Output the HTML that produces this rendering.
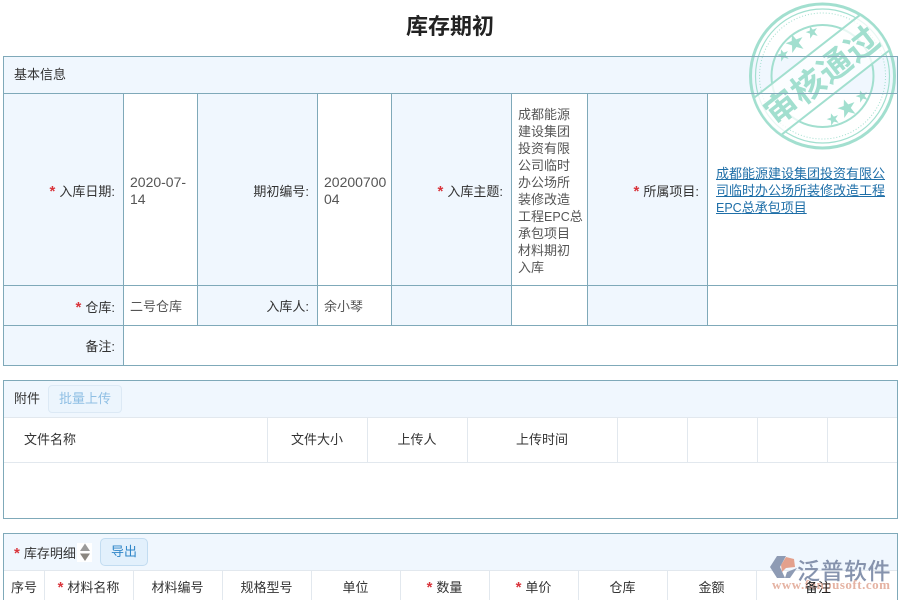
<!DOCTYPE html>
<html lang="zh"><head><meta charset="utf-8"><title>库存期初</title>
<style>
*{box-sizing:border-box}
html,body{margin:0;padding:0;width:900px;height:600px;overflow:hidden;background:#fff}
body{position:relative;font-family:"Noto Sans CJK SC",sans-serif;font-size:13px;color:#333}
.a{position:absolute}
.bg{position:absolute;background:#f0f7fe}
.h{position:absolute;height:1px;background:#7fa9b9}
.v{position:absolute;width:1px;background:#7fa9b9}
.lh{position:absolute;height:1px;background:#e2e8ee}
.lv{position:absolute;width:1px;background:#e2e8ee}
.t{position:absolute;white-space:nowrap;line-height:17px;height:17px;margin-top:-1px}
.r{text-align:right}
.c{text-align:center}
.s{color:#d9343b;font-family:"Liberation Sans",sans-serif;font-size:15px;font-weight:bold;line-height:0;position:relative;top:0;margin-right:4px}
.val{color:#555}
.n{font-family:"Liberation Sans",sans-serif;font-size:14px}
.e{font-family:"Liberation Sans",sans-serif;font-size:12.5px;line-height:0}
.co{font-family:"Liberation Sans",sans-serif}
</style></head><body>
<div class="t" style="left:0;width:900px;top:12px;height:28px;line-height:28px;font-size:22px;font-weight:bold;text-align:center;color:#222">库存期初</div>

<div class="bg" style="left:3px;top:56px;width:894px;height:37px"></div>
<div class="bg" style="left:3px;top:93px;width:120px;height:272px"></div>
<div class="bg" style="left:197px;top:93px;width:120px;height:232px"></div>
<div class="bg" style="left:391px;top:93px;width:120px;height:232px"></div>
<div class="bg" style="left:587px;top:93px;width:120px;height:232px"></div>

<div class="h" style="left:3px;top:56px;width:895px"></div>
<div class="h" style="left:3px;top:93px;width:895px"></div>
<div class="h" style="left:3px;top:285px;width:895px"></div>
<div class="h" style="left:3px;top:325px;width:895px"></div>
<div class="h" style="left:3px;top:365px;width:895px"></div>
<div class="v" style="left:3px;top:56px;height:310px"></div>
<div class="v" style="left:897px;top:56px;height:310px"></div>
<div class="v" style="left:123px;top:93px;height:272px"></div>
<div class="v" style="left:197px;top:93px;height:232px"></div>
<div class="v" style="left:317px;top:93px;height:232px"></div>
<div class="v" style="left:391px;top:93px;height:232px"></div>
<div class="v" style="left:511px;top:93px;height:232px"></div>
<div class="v" style="left:587px;top:93px;height:232px"></div>
<div class="v" style="left:707px;top:93px;height:232px"></div>

<div class="t" style="left:14px;top:66px">基本信息</div>
<div class="t r" style="left:3px;width:112px;top:183px"><span class="s">*</span>入库日期<span class="co">:</span></div>
<div class="a val n" style="left:130px;top:174px;width:62px;line-height:17px">2020-07-<br>14</div>
<div class="t r" style="left:197px;width:112px;top:183px">期初编号<span class="co">:</span></div>
<div class="a val n" style="left:324px;top:174px;width:66px;line-height:17px">20200700<br>04</div>
<div class="t r" style="left:391px;width:112px;top:183px"><span class="s">*</span>入库主题<span class="co">:</span></div>
<div class="a val" style="left:518px;top:105px;width:68px;line-height:17px;white-space:nowrap">成都能源<br>建设集团<br>投资有限<br>公司临时<br>办公场所<br>装修改造<br>工程<span class="e">EPC</span>总<br>承包项目<br>材料期初<br>入库</div>
<div class="t r" style="left:587px;width:112px;top:183px"><span class="s">*</span>所属项目<span class="co">:</span></div>
<div class="a" style="left:716px;top:164px;width:178px;line-height:17px;color:#1f6fa8;text-decoration:underline;white-space:nowrap">成都能源建设集团投资有限公<br>司临时办公场所装修改造工程<br><span class="e">EPC</span>总承包项目</div>

<div class="t r" style="left:3px;width:112px;top:299px"><span class="s">*</span>仓库<span class="co">:</span></div>
<div class="t val" style="left:130px;top:298px">二号仓库</div>
<div class="t r" style="left:197px;width:112px;top:298px">入库人<span class="co">:</span></div>
<div class="t val" style="left:324px;top:298px">余小琴</div>
<div class="t r" style="left:3px;width:112px;top:338px">备注<span class="co">:</span></div>

<div class="bg" style="left:3px;top:380px;width:894px;height:37px"></div>
<div class="h" style="left:3px;top:380px;width:895px"></div>
<div class="h" style="left:3px;top:518px;width:895px"></div>
<div class="v" style="left:3px;top:380px;height:139px"></div>
<div class="v" style="left:897px;top:380px;height:139px"></div>
<div class="lh" style="left:4px;top:417px;width:893px"></div>
<div class="lh" style="left:4px;top:462px;width:893px"></div>
<div class="lv" style="left:267px;top:418px;height:44px"></div>
<div class="lv" style="left:367px;top:418px;height:44px"></div>
<div class="lv" style="left:467px;top:418px;height:44px"></div>
<div class="lv" style="left:617px;top:418px;height:44px"></div>
<div class="lv" style="left:687px;top:418px;height:44px"></div>
<div class="lv" style="left:757px;top:418px;height:44px"></div>
<div class="lv" style="left:827px;top:418px;height:44px"></div>
<div class="t" style="left:14px;top:390px">附件</div>
<div class="a" style="left:48px;top:385px;width:74px;height:28px;border:1px solid #dce9f5;border-radius:4px;background:#ecf5fd;color:#8fbfe4;text-align:center;line-height:23px">批量上传</div>
<div class="t" style="left:24px;top:431px">文件名称</div>
<div class="t c" style="left:267px;width:100px;top:431px">文件大小</div>
<div class="t c" style="left:367px;width:100px;top:431px">上传人</div>
<div class="t c" style="left:467px;width:150px;top:431px">上传时间</div>

<div class="bg" style="left:3px;top:533px;width:894px;height:37px"></div>
<div class="h" style="left:3px;top:533px;width:895px"></div>
<div class="v" style="left:3px;top:533px;height:67px"></div>
<div class="v" style="left:897px;top:533px;height:67px"></div>
<div class="lh" style="left:4px;top:570px;width:893px"></div>
<div class="lv" style="left:44px;top:571px;height:29px"></div>
<div class="lv" style="left:133px;top:571px;height:29px"></div>
<div class="lv" style="left:222px;top:571px;height:29px"></div>
<div class="lv" style="left:311px;top:571px;height:29px"></div>
<div class="lv" style="left:400px;top:571px;height:29px"></div>
<div class="lv" style="left:489px;top:571px;height:29px"></div>
<div class="lv" style="left:578px;top:571px;height:29px"></div>
<div class="lv" style="left:667px;top:571px;height:29px"></div>
<div class="lv" style="left:756px;top:571px;height:29px"></div>
<div class="t" style="left:14px;top:545px"><span class="s">*</span>库存明细</div>
<div class="a" style="left:77px;top:543px;width:15px;height:19px;background:#fff"></div>
<svg class="a" style="left:77px;top:543px" width="15" height="19" viewBox="0 0 15 19"><path d="M8 0.500 13 8H3z" fill="#9a9a9a"/><path d="M3 10.500h10L8 18z" fill="#8a8680"/></svg>
<div class="a" style="left:100px;top:538px;width:48px;height:28px;border:1px solid #c2dcf1;border-radius:5px;background:#e2f0fc;color:#2f86c8;text-align:center;line-height:23px">导出</div>
<div class="t c" style="left:4px;width:40px;top:579px">序号</div>
<div class="t c" style="left:44px;width:89px;top:579px"><span class="s">*</span>材料名称</div>
<div class="t c" style="left:133px;width:89px;top:579px">材料编号</div>
<div class="t c" style="left:222px;width:89px;top:579px">规格型号</div>
<div class="t c" style="left:311px;width:89px;top:579px">单位</div>
<div class="t c" style="left:400px;width:89px;top:579px"><span class="s">*</span>数量</div>
<div class="t c" style="left:489px;width:89px;top:579px"><span class="s">*</span>单价</div>
<div class="t c" style="left:578px;width:89px;top:579px">仓库</div>
<div class="t c" style="left:667px;width:89px;top:579px">金额</div>

<svg class="a" style="left:765px;top:550px" width="135" height="50" viewBox="0 0 135 50">
<path d="M5 17 12 6h9l-6 11 5 11h-8z" fill="#8e9bb4"/>
<path d="M16 15 21 7l8 2 1 8-9 1-4 4z" fill="#e3a08c"/>
<path d="M20 28l2-6 10-4-7 10z" fill="#8e9bb4"/>
<text x="32" y="29" font-family="'Noto Sans CJK SC',sans-serif" font-size="23" font-weight="500" fill="#8693ad" letter-spacing=".5">泛普软件</text>
<text x="7" y="39" font-family="'Liberation Serif',serif" font-size="13" font-weight="bold" fill="#e5b3a3" textLength="118" lengthAdjust="spacing">www.fanpusoft.com</text>
</svg>
<div class="t c" style="left:756px;width:124px;top:579px;color:#222">备注</div>

<svg class="a" style="left:740px;top:0" width="160" height="155" viewBox="0 0 160 155">
<defs><clipPath id="cp"><circle cx="82.500" cy="76" r="71"/></clipPath></defs>
<g fill="none" stroke="#a2dfcf">
<circle cx="82.500" cy="76" r="72" stroke-width="3"/>
<circle cx="82.500" cy="76" r="67" stroke-width="1.200"/>
<circle cx="82.500" cy="76" r="63" stroke-width="1" stroke-dasharray="1 2"/>
<circle cx="82.500" cy="76" r="51" stroke-width="2"/>
</g>
<g clip-path="url(#cp)">
<g transform="rotate(-38 82.500 76)">
<rect x="8" y="51" width="150" height="46" fill="#fff" fill-opacity=".75"/>
<path d="M8 51H158M8 97H158" stroke="#a2dfcf" stroke-width="2"/>
</g>
</g>
<g transform="rotate(-38 82.500 76)">
<text x="82.500" y="87" text-anchor="middle" font-family="'Noto Sans CJK SC',sans-serif" font-size="33" font-weight="700" fill="#a2dfcf" letter-spacing="1">审核通过</text>
</g>
<g fill="#a2dfcf">
<polygon points="0,-7.500 2,-2.500 7.500,-2.500 3,1 5,7 0,3.500 -5,7 -3,1 -7.500,-2.500 -2,-2.500" transform="translate(55 43) rotate(-20) scale(1.200)"/>
<polygon points="0,-7.500 2,-2.500 7.500,-2.500 3,1 5,7 0,3.500 -5,7 -3,1 -7.500,-2.500 -2,-2.500" transform="translate(72 32) rotate(-20) scale(.8)"/>
<polygon points="0,-7.500 2,-2.500 7.500,-2.500 3,1 5,7 0,3.500 -5,7 -3,1 -7.500,-2.500 -2,-2.500" transform="translate(43 55) rotate(-20) scale(.8)"/>
<polygon points="0,-7.500 2,-2.500 7.500,-2.500 3,1 5,7 0,3.500 -5,7 -3,1 -7.500,-2.500 -2,-2.500" transform="translate(107 108) rotate(-20) scale(1.200)"/>
<polygon points="0,-7.500 2,-2.500 7.500,-2.500 3,1 5,7 0,3.500 -5,7 -3,1 -7.500,-2.500 -2,-2.500" transform="translate(93 119) rotate(-20) scale(.8)"/>
<polygon points="0,-7.500 2,-2.500 7.500,-2.500 3,1 5,7 0,3.500 -5,7 -3,1 -7.500,-2.500 -2,-2.500" transform="translate(122 96) rotate(-20) scale(.8)"/>
</g>
</svg>
<div class="h" style="left:740px;top:56px;width:158px"></div>
<div class="h" style="left:740px;top:93px;width:158px"></div>
<div class="v" style="left:897px;top:56px;height:100px"></div>
</body></html>
